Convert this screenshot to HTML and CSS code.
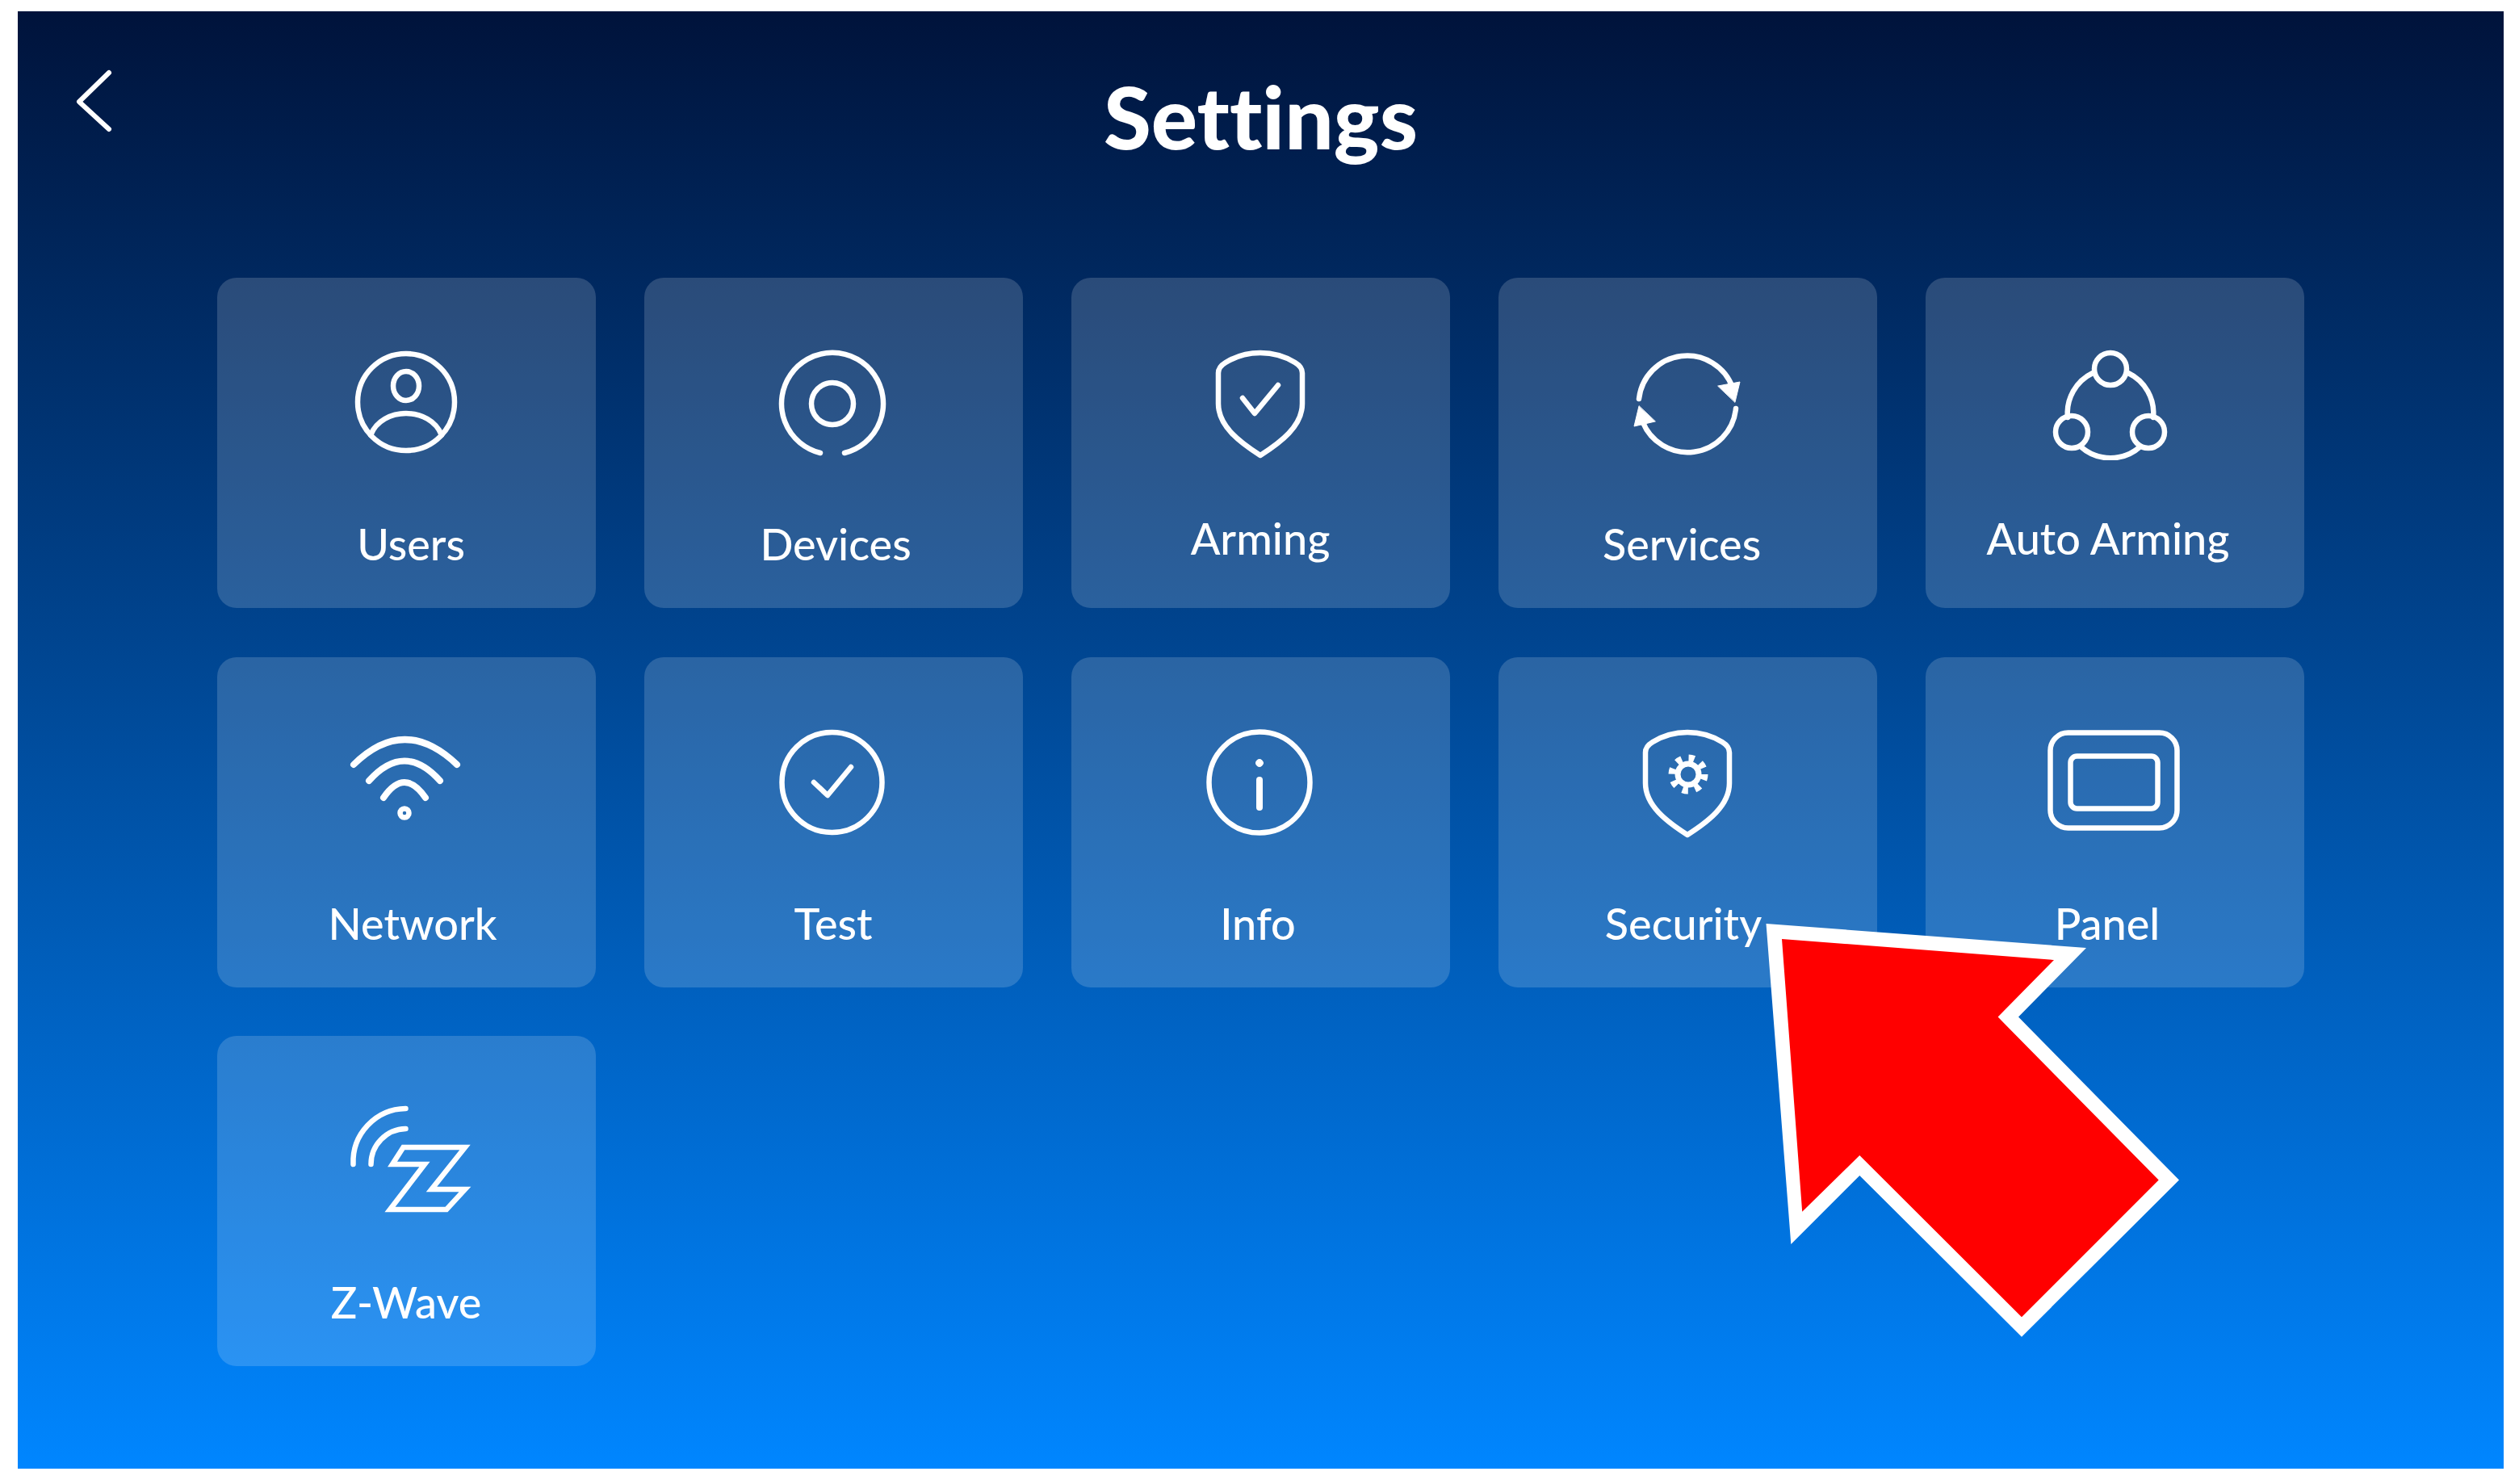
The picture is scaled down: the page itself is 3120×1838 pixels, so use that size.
FILE: index.html
```html
<!DOCTYPE html>
<html lang="en">
<head>
    <meta charset="UTF-8">
    <title>Settings</title>
    <link rel="stylesheet" href="styles.css">
</head>
<body>
    <div class="screen">
        <div class="header">
            <svg class="back-icon" viewBox="0 0 50 80"><path d="M44 5 L7 41 L44 75"/></svg>
            <h1 class="title">Settings</h1>
        </div>

        <div class="menu">
            <div class="card card-users">
                <svg class="icon" viewBox="-20 0 180 140">
                    <circle cx="70" cy="68" r="60"/>
                    <ellipse cx="70" cy="48" rx="16" ry="18"/>
                    <path d="M26 109 C40 73 100 73 114 109"/>
                </svg>
                <div class="card-label">Users</div>
            </div>
            <div class="card card-devices">
                <svg class="icon" viewBox="-20 0 180 140">
                    <path d="M54 131 A63 63 0 1 1 84 131"/>
                    <circle cx="69" cy="70" r="26"/>
                </svg>
                <div class="card-label">Devices</div>
            </div>
            <div class="card card-arming">
                <svg class="icon" viewBox="-20 0 180 140">
                    <path d="M18 32 C18 26 22 22 27 19 C40 11 55 7 70 7 C85 7 100 11 113 19 C118 22 122 26 122 32 V70 C122 98 95 118 70 134 C45 118 18 98 18 70 Z"/>
                    <path d="M48 63 L63 82 L92 47"/>
                </svg>
                <div class="card-label">Arming</div>
            </div>
            <div class="card card-services">
                <svg class="icon" viewBox="-20 0 180 140">
                    <path d="M10 64 A60 60 0 0 1 126 50"/>
                    <path d="M130 76 A60 60 0 0 1 14 91"/>
                    <path class="solid" d="M108 48 L135 43 L129 68 Z"/>
                    <path class="solid" d="M10 73 L4 98 L30 92 Z"/>
                </svg>
                <div class="card-label">Services</div>
            </div>
            <div class="card card-auto">
                <svg class="icon" viewBox="-20 0 180 140">
                    <circle cx="65" cy="27" r="20"/>
                    <circle cx="17" cy="105" r="20"/>
                    <circle cx="112" cy="105" r="20"/>
                    <path d="M43 32 A55 55 0 0 0 12 87"/>
                    <path d="M87 32 A55 55 0 0 1 118 87"/>
                    <path d="M28 123 A55 55 0 0 0 102 123"/>
                </svg>
                <div class="card-label">Auto Arming</div>
            </div>

            <div class="card card-network">
                <svg class="icon wifi" viewBox="-20 0 180 140">
                    <path d="M5 47 Q68 -15 133 47"/>
                    <path d="M24 67 Q68 18 112 67"/>
                    <path d="M42 88 Q68 50 94 88"/>
                    <circle cx="68" cy="107" r="5.5"/>
                </svg>
                <div class="card-label">Network</div>
            </div>
            <div class="card">
                <svg class="icon" viewBox="-20 0 180 140">
                    <circle cx="68.5" cy="69" r="62"/>
                    <path d="M46 69 L63 85 L92 50"/>
                </svg>
                <div class="card-label">Test</div>
            </div>
            <div class="card card-info">
                <svg class="icon" viewBox="-20 0 180 140">
                    <circle cx="69" cy="69" r="62.5"/>
                    <circle class="solid" cx="69" cy="45" r="4.5"/>
                    <path class="stem" d="M69 66 V100"/>
                </svg>
                <div class="card-label">Info</div>
            </div>
            <div class="card card-security">
                <svg class="icon" viewBox="-20 0 180 140">
                    <path d="M18 32 C18 26 22 22 27 19 C40 11 55 7 70 7 C85 7 100 11 113 19 C118 22 122 26 122 32 V70 C122 98 95 118 70 134 C45 118 18 98 18 70 Z"/>
                    <circle class="gear-ring" cx="71" cy="59" r="13"/>
                    <circle class="gear-teeth" cx="71" cy="59" r="20"/>
                </svg>
                <div class="card-label">Security</div>
            </div>
            <div class="card card-panel">
                <svg class="icon" viewBox="-20 0 180 140">
                    <rect x="-9.5" y="7.5" width="157" height="118" rx="22"/>
                    <rect x="15.5" y="36.5" width="108" height="65" rx="8"/>
                </svg>
                <div class="card-label">Panel</div>
            </div>

            <div class="card">
                <svg class="icon" viewBox="-20 0 180 140">
                    <path d="M69.5 4 A66 66 0 0 0 4.5 73"/>
                    <path d="M69.5 29 A44 44 0 0 0 26.5 73"/>
                    <path class="sharp" d="M66.5 52 H143 L101.5 104 H143 L120 129 H50 L93 73 H53 Z"/>
                </svg>
                <div class="card-label">Z-Wave</div>
            </div>
        </div>
    </div>

    <svg class="pointer" viewBox="0 0 3120 1838">
        <polygon class="pointer-edge" points="2187.5,1144 2584,1174 2500,1259.6 2699,1461.6 2504,1655.7 2303.3,1456 2218.3,1541"/>
        <polygon class="pointer-fill" points="2207,1163 2544,1189 2474.6,1259.6 2673.7,1461.6 2504,1631.2 2303.3,1431 2232.2,1500.7"/>
    </svg>
</body>
</html>
```

FILE: styles.css
```css
* {
    margin: 0;
    padding: 0;
    box-sizing: border-box;
}
body {
    font-family: 'Lato', 'Open Sans', sans-serif;
    font-variant-ligatures: none;
    background: #fff;
    width: 3120px;
    height: 1838px;
    padding: 14px 19px 19px 22px;
    overflow: hidden;
}
.screen {
    height: 1805px;
    background: linear-gradient(180deg, #00133b 0%, #0086ff 100%);
    color: #fff;
}
.header {
    height: 330px;
    display: grid;
    grid-template-columns: 1fr auto 1fr;
    align-items: start;
}
.back-icon {
    width: 50px;
    height: 80px;
    margin: 71px 0 0 69px;
    fill: none;
    stroke: #fff;
    stroke-width: 6;
    stroke-linecap: round;
    stroke-linejoin: round;
}
.title {
    font-size: 107px;
    font-weight: 900;
    line-height: 120px;
    margin-top: 70px;
}
.menu {
    display: grid;
    grid-template-columns: repeat(5, 469px);
    grid-auto-rows: 409px;
    column-gap: 60px;
    row-gap: 60.5px;
    padding-left: 246.5px;
}
.card {
    background: rgba(255, 255, 255, 0.165);
    border-radius: 24px;
    padding-top: 86px;
    display: flex;
    flex-direction: column;
    align-items: center;
}
.icon {
    width: 180px;
    height: 140px;
    fill: none;
    stroke: #fff;
    stroke-width: 6.5;
    stroke-linecap: round;
    stroke-linejoin: round;
}
.icon .solid {
    fill: #fff;
    stroke-width: 1;
}
.icon .sharp {
    stroke-linejoin: miter;
}
.icon .stem {
    stroke-width: 8;
}
.wifi path {
    stroke-width: 8;
}
.gear-ring {
    stroke-width: 7;
}
.icon .gear-teeth {
    stroke-width: 9;
    stroke-dasharray: 7 8.7;
    stroke-linecap: butt;
}
.card-label {
    font-size: 54px;
    font-weight: 500;
    line-height: 64px;
    margin-top: 72px;
}
.card-users .card-label { margin-left: 12px; }
.card-devices .card-label { margin-left: 6px; }
.card-arming .card-label { margin-top: 65px; }
.card-services .card-label { margin-right: 14px; }
.card-auto .card-label { margin-top: 65px; margin-right: 16px; }
.card-network .card-label { margin-left: 16px; }
.card-info .card-label { margin-right: 6px; }
.card-security .card-label { margin-right: 10px; }
.card-panel .card-label { margin-right: 18px; }

/* annotation drawn over the screenshot */
.pointer {
    position: absolute;
    left: 0;
    top: 0;
    width: 3120px;
    height: 1838px;
}
.pointer-edge {
    fill: #fff;
}
.pointer-fill {
    fill: #f00;
}
```
